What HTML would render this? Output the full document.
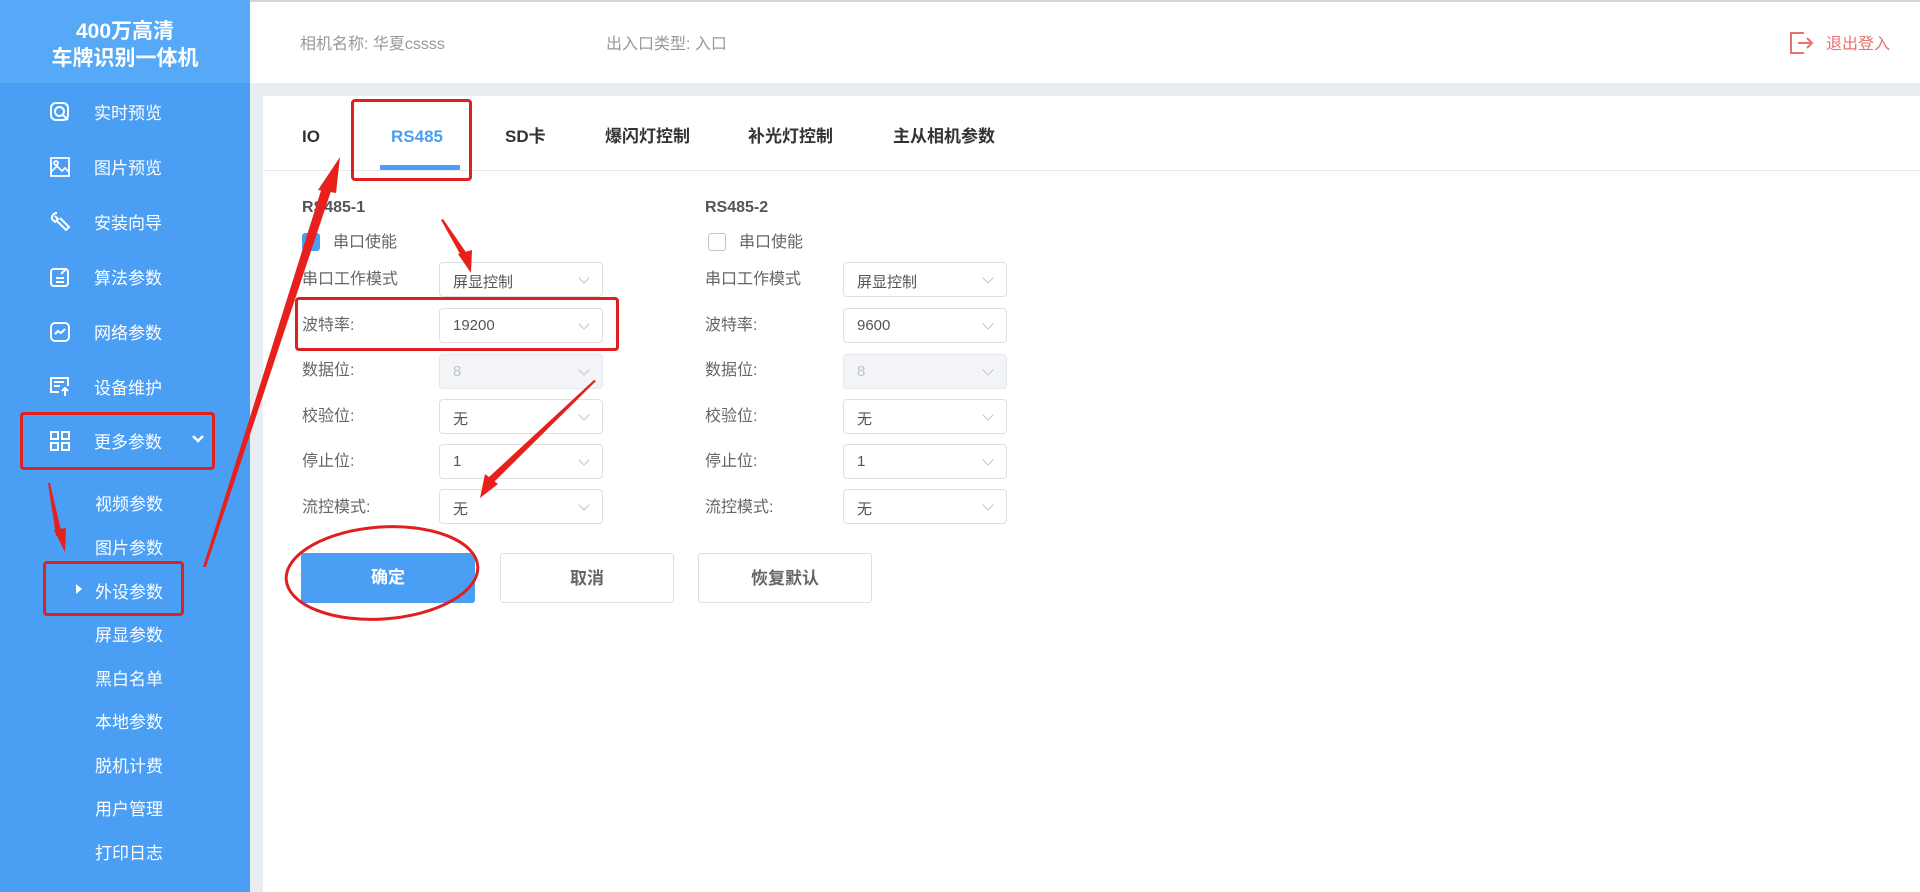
<!DOCTYPE html>
<html><head><meta charset="utf-8"><style>
*{margin:0;padding:0;box-sizing:border-box}
body{width:1920px;height:892px;overflow:hidden;background:#fff;font-family:"Liberation Sans","Noto Sans CJK SC",sans-serif;position:relative}
.side{position:absolute;left:0;top:0;width:250px;height:892px;background:#4a9ff5}
.logo{height:83px;background:#56a9f6;color:#fff;font-weight:bold;font-size:21px;text-align:center;line-height:27px;padding-top:18px}
.mi{position:absolute;left:0;width:250px;color:#fff;font-size:17px}
.mi svg{position:absolute;left:49px;top:-10px}
.mi span{position:absolute;left:94px;top:-12px}
.sub{position:absolute;left:95px;color:#fff;font-size:17px}
.hdr{position:absolute;left:250px;top:0;right:0;height:83px;border-top:2px solid #d4d4d4;color:#999;font-size:16px}
.strip{position:absolute;left:250px;top:83px;right:0;height:13px;background:#e8edf2}
.lstrip{position:absolute;left:250px;top:96px;width:13px;height:796px;background:#e8edf2}
.tab{position:absolute;top:127px;height:20px;line-height:20px;font-size:17px;font-weight:bold;color:#333}
.tabline{position:absolute;left:263px;right:0;top:170px;height:1px;background:#e4e7ed}
.lab{position:absolute;font-size:16px;color:#666;line-height:20px}
.sel{position:absolute;width:164px;height:35px;border:1px solid #dcdfe6;border-radius:4px;font-size:15px;color:#555;padding:8px 0 0 13px;background:#fff}
.sel.dis{background:#f2f4f7;color:#c0c4cc;border-color:#e4e7ed}
.sel::after{content:"";position:absolute;right:14px;top:11px;width:7px;height:7px;border-right:1.5px solid #c0c4cc;border-bottom:1.5px solid #c0c4cc;transform:rotate(45deg)}
.btn{position:absolute;top:553px;width:174px;height:50px;border-radius:3px;font-size:17px;font-weight:bold;text-align:center;line-height:50px}
.rb{position:absolute;border:3px solid #e02020;border-radius:4px}
</style></head><body>
<div class="side">
<div class="logo">400万高清<br>车牌识别一体机</div>
</div>
<div class="mi" style="top:111px"><svg width="22" height="22" viewBox="0 0 22 22" fill="none" stroke="#fff" stroke-width="2"><rect x="2" y="2" width="17" height="17" rx="5"/><circle cx="10.5" cy="10.5" r="4.5"/><path d="M14 14l5 5"/></svg><span>实时预览</span></div>
<div class="mi" style="top:166px"><svg width="22" height="22" viewBox="0 0 22 22" fill="none" stroke="#fff" stroke-width="1.8"><rect x="2" y="2" width="18" height="18"/><circle cx="7" cy="7" r="2"/><path d="M2 16l6-6 5 5 3-3 4 4"/></svg><span>图片预览</span></div>
<div class="mi" style="top:221px"><svg width="22" height="22" viewBox="0 0 22 22" fill="none" stroke="#fff" stroke-width="2"><path d="M8 2a5 5 0 0 0-5 6l3 3 3-3-3-3M8 10l9 9 3-3-9-9"/></svg><span>安装向导</span></div>
<div class="mi" style="top:276px"><svg width="22" height="22" viewBox="0 0 22 22" fill="none" stroke="#fff" stroke-width="2"><rect x="2" y="3" width="17" height="17" rx="3"/><path d="M7 12h8M7 16h8M12 8l5-5"/></svg><span>算法参数</span></div>
<div class="mi" style="top:331px"><svg width="22" height="22" viewBox="0 0 22 22" fill="none" stroke="#fff" stroke-width="2"><rect x="2" y="2" width="18" height="18" rx="4"/><path d="M6 13l3-3 3 2 4-4"/></svg><span>网络参数</span></div>
<div class="mi" style="top:386px"><svg width="22" height="22" viewBox="0 0 22 22" fill="none" stroke="#fff" stroke-width="2"><path d="M10 16H2V2h17v8M5 6h10M5 10h6M16 20v-8M13 15l3-3 3 3"/></svg><span>设备维护</span></div>
<div class="mi" style="top:440px"><svg width="22" height="22" viewBox="0 0 22 22" fill="none" stroke="#fff" stroke-width="2"><rect x="2" y="2" width="7" height="7"/><rect x="13" y="2" width="7" height="7"/><rect x="2" y="13" width="7" height="7"/><rect x="13" y="13" width="7" height="7"/></svg><span>更多参数</span><svg style="left:191px;top:-6px" width="14" height="10" viewBox="0 0 14 10" fill="none" stroke="#fff" stroke-width="2.5"><path d="M2 2l5 5 5-5"/></svg></div>
<div class="sub" style="top:490px">视频参数</div>
<div class="sub" style="top:534px">图片参数</div>
<div style="position:absolute;left:76px;top:584px;border-left:6px solid #fff;border-top:5px solid transparent;border-bottom:5px solid transparent"></div>
<div class="sub" style="top:578px">外设参数</div>
<div class="sub" style="top:621px">屏显参数</div>
<div class="sub" style="top:665px">黑白名单</div>
<div class="sub" style="top:708px">本地参数</div>
<div class="sub" style="top:752px">脱机计费</div>
<div class="sub" style="top:795px">用户管理</div>
<div class="sub" style="top:839px">打印日志</div>

<div class="hdr">
<div style="position:absolute;left:50px;top:28px">相机名称: 华夏cssss</div>
<div style="position:absolute;left:356px;top:28px">出入口类型: 入口</div>
<svg style="position:absolute;left:1539px;top:29px" width="26" height="24" viewBox="0 0 26 24" fill="none" stroke="#e57373" stroke-width="2"><path d="M15 2H2v20h13M9 12h14M18 7l5 5-5 5"/></svg>
<div style="position:absolute;left:1576px;top:28px;color:#e57373">退出登入</div>
</div>
<div class="strip"></div><div class="lstrip"></div>

<div class="tab" style="left:302px">IO</div>
<div class="tab" style="left:391px;color:#4a9ff5">RS485</div>
<div style="position:absolute;left:380px;top:165px;width:80px;height:5px;background:#4a9ff5"></div>
<div class="tab" style="left:505px">SD卡</div>
<div class="tab" style="left:605px">爆闪灯控制</div>
<div class="tab" style="left:748px">补光灯控制</div>
<div class="tab" style="left:893px">主从相机参数</div>
<div class="tabline"></div>

<div class="lab" style="left:302px;top:198px;font-weight:bold;color:#555">RS485-1</div>
<div style="position:absolute;left:302px;top:233px;width:18px;height:18px;border-radius:3px;background:#4a9ff5"></div>
<div class="lab" style="left:333px;top:233px">串口使能</div>
<div class="lab" style="left:705px;top:198px;font-weight:bold;color:#555">RS485-2</div>
<div style="position:absolute;left:708px;top:233px;width:18px;height:18px;border-radius:3px;border:1px solid #c0c4cc"></div>
<div class="lab" style="left:739px;top:233px">串口使能</div>

<div class="lab" style="left:302px;top:270px">串口工作模式</div><div class="sel" style="left:439px;top:262px">屏显控制</div>
<div class="lab" style="left:302px;top:316px">波特率:</div><div class="sel" style="left:439px;top:308px">19200</div>
<div class="lab" style="left:302px;top:361px">数据位:</div><div class="sel dis" style="left:439px;top:354px">8</div>
<div class="lab" style="left:302px;top:407px">校验位:</div><div class="sel" style="left:439px;top:399px">无</div>
<div class="lab" style="left:302px;top:452px">停止位:</div><div class="sel" style="left:439px;top:444px">1</div>
<div class="lab" style="left:302px;top:498px">流控模式:</div><div class="sel" style="left:439px;top:489px">无</div>

<div class="lab" style="left:705px;top:270px">串口工作模式</div><div class="sel" style="left:843px;top:262px">屏显控制</div>
<div class="lab" style="left:705px;top:316px">波特率:</div><div class="sel" style="left:843px;top:308px">9600</div>
<div class="lab" style="left:705px;top:361px">数据位:</div><div class="sel dis" style="left:843px;top:354px">8</div>
<div class="lab" style="left:705px;top:407px">校验位:</div><div class="sel" style="left:843px;top:399px">无</div>
<div class="lab" style="left:705px;top:452px">停止位:</div><div class="sel" style="left:843px;top:444px">1</div>
<div class="lab" style="left:705px;top:498px">流控模式:</div><div class="sel" style="left:843px;top:489px">无</div>

<div class="btn" style="left:301px;background:#4a9ff5;color:#fff">确定</div>
<div class="btn" style="left:500px;border:1px solid #dcdfe6;color:#666">取消</div>
<div class="btn" style="left:698px;border:1px solid #dcdfe6;color:#666">恢复默认</div>

<div class="rb" style="left:351px;top:99px;width:121px;height:82px"></div>
<div class="rb" style="left:295px;top:297px;width:324px;height:54px"></div>
<div class="rb" style="left:20px;top:412px;width:195px;height:58px"></div>
<div class="rb" style="left:43px;top:561px;width:141px;height:55px"></div>
<svg style="position:absolute;left:0;top:0" width="1920" height="892">
<ellipse cx="382" cy="573" rx="96" ry="46" fill="none" stroke="#e02020" stroke-width="3" transform="rotate(-4 382 573)"/>
<g fill="#e8201c">
<polygon points="203,567 206,567 333,185 324,181"/>
<polygon points="340,157 318,190 336,193"/>
<polygon points="48,483 50,483 62,535 56,536"/>
<polygon points="65,552 54,530 66,528"/>
<polygon points="441,220 443,219 470,258 464,261"/>
<polygon points="471,273 458,254 472,250"/>
<polygon points="594,380 596,381 494,482 488,478"/>
<polygon points="480,498 485,474 498,484"/>
</g>
</svg>
</body></html>
